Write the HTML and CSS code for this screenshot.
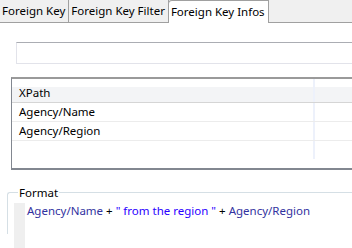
FILE: index.html
```html
<!DOCTYPE html>
<html>
<head>
    <title>Foreign Key Infos</title>
    <link rel="stylesheet" href="styles.css">
</head>
<body>
    <div class="tabs">
        <div class="tab">Foreign Key</div>
        <div class="tab">Foreign Key Filter</div>
        <div class="tab active">Foreign Key Infos</div>
        <div class="tab-rest"></div>
    </div>

    <div class="page">
        <div class="text-field"></div>

        <div class="grid">
            <div class="grid-head">
                <div class="cell main">XPath</div>
                <div class="cell side"></div>
            </div>
            <div class="grid-row">
                <div class="cell main">Agency/Name</div>
                <div class="cell side"></div>
            </div>
            <div class="grid-row">
                <div class="cell main">Agency/Region</div>
                <div class="cell side"></div>
            </div>
            <div class="grid-row">
                <div class="cell main"></div>
                <div class="cell side"></div>
            </div>
        </div>

        <fieldset class="format">
            <legend>Format</legend>
            <div class="editor">
                <div class="ruler"></div>
                <div class="code"><span class="ident">Agency/Name</span> + <span class="str">" from the region "</span> + <span class="ident">Agency/Region</span></div>
            </div>
        </fieldset>
    </div>
</body>
</html>
```

FILE: styles.css
```css
body {
    margin: 0;
    width: 352px;
    height: 248px;
    overflow: hidden;
    background: white;
    font-family: "Noto Sans", "Open Sans", sans-serif;
    font-size: 11.5px;
    color: #000;
}
.tabs {
    display: flex;
    height: 23px;
    background: #f0f0f0;
}
.tab {
    padding: 0 3px 0 2px;
    line-height: 22px;
    border-right: 1px solid #a0a0a0;
    border-bottom: 1px solid #a0a0a0;
    background: #f0f0f0;
    white-space: nowrap;
}
.tab.active {
    background: white;
    border-top: 1px solid #a0a0a0;
    border-left: 1px solid #a0a0a0;
    border-bottom: none;
    border-top-left-radius: 4px;
    line-height: 22px;
    margin-left: -1px;
}
.tab-rest {
    flex: 1;
    border-bottom: 1px solid #a0a0a0;
}
.page {
    padding-top: 19px;
}
.text-field {
    margin-left: 16px;
    height: 20px;
    border: 1px solid #e2e3ea;
    border-top-color: #abadb3;
    border-right: none;
}
.grid {
    margin: 13px 0 0 11px;
    border: 1px solid #828790;
    border-width: 2px 0 2px 1px;
    border-top-color: #9a9a9a;
    height: 89px;
}
.grid-head {
    display: flex;
    height: 23px;
    background: linear-gradient(#ffffff 0, #ffffff 8px, #f3f4f6 8px, #f3f4f6 100%);
    border-bottom: 1px solid #d5d5d5;
}
.grid-head .cell {
    line-height: 27px;
}
.grid-head .side {
    border-left: 2px solid #e3e3e3;
}
.grid-row {
    display: flex;
    height: 18px;
    border-bottom: 1px solid #ececec;
}
.grid-row:last-child {
    border-bottom: none;
}
.cell {
    line-height: 18px;
    padding-left: 7px;
    white-space: nowrap;
}
.cell.main {
    width: 294px;
}
.cell.side {
    flex: 1;
    border-left: 2px solid #edf1fb;
}
.format {
    margin: 15px 0 0 7px;
    padding: 0 0 0 6px;
    border: 1px solid #d5dfe5;
    border-right: none;
    border-bottom: none;
    border-radius: 3px 0 0 0;
    height: 48px;
}
.format legend {
    padding: 0 1px;
    margin-left: 4px;
    font-size: 11.5px;
}
.editor {
    display: flex;
    height: 45px;
    margin-top: 3px;
}
.ruler {
    width: 11px;
    background: #efefef;
}
.code {
    padding-left: 2px;
    line-height: 15px;
    white-space: nowrap;
}
.ident {
    color: #3232a0;
}
.str {
    color: #2a00ff;
}
```
